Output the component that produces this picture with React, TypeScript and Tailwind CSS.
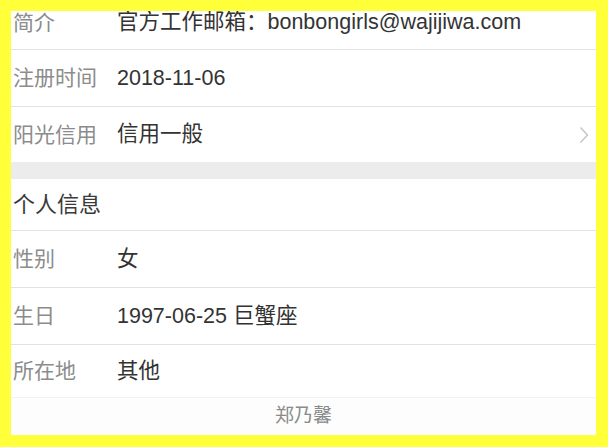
import React from "react";

const font = { fontFamily: '"Liberation Sans", "Noto Sans CJK SC", sans-serif' };

interface RowProps {
    label: string;
    value: string;
    className?: string;
    arrow?: boolean;
}

const Row = ({ label, value, className = "", arrow }: RowProps) => (
    <div className={`flex items-center border-b border-[#e2e2e2] pl-[2px] pr-[6px] shrink-0 ${className}`}>
        <div className="w-[104px] text-[21px] text-[#8c8c8c]">{label}</div>
        <div className="flex-1 text-[21.5px] text-[#333333] whitespace-pre">{value}</div>
        {arrow && (
            <svg width="10" height="18" viewBox="0 0 10 18" className="mr-[1px]">
                <polyline points="1.5,1.5 8.5,9 1.5,16.5" fill="none" stroke="#c4c4c4" strokeWidth="1.4" />
            </svg>
        )}
    </div>
);

export default function App() {
    return (
        <div className="w-[608px] h-[447px] bg-[#ffff3a] pt-[11px] pl-[11px] pr-[12px] pb-[12px]" style={font}>
            <div className="w-full h-full bg-white overflow-hidden flex flex-col">
                {/* list is scrolled: only the lower part of the first row shows */}
                <Row label="简介" value="官方工作邮箱：bonbongirls@wajijiwa.com" className="h-[39px] pb-[15px]" />
                <Row label="注册时间" value="2018-11-06" className="h-[57px]" />
                <Row label="阳光信用" value="信用一般" className="h-[55px] border-b-0" arrow />
                <div className="h-[17px] bg-[#ececec] shrink-0" />
                <div className="h-[52px] flex items-center pl-[2px] border-b border-[#e2e2e2] text-[22px] text-[#3a3a3a] shrink-0">
                    个人信息
                </div>
                <Row label="性别" value="女" className="h-[57px]" />
                <Row label="生日" value="1997-06-25 巨蟹座" className="h-[57px]" />
                <Row label="所在地" value="其他" className="h-[53px] border-[#f2f2f2]" />
                <div className="flex-1 flex items-center justify-center bg-[#fdfdfd] text-[19px] text-[#8a8a8a]">
                    郑乃馨
                </div>
            </div>
        </div>
    );
}
